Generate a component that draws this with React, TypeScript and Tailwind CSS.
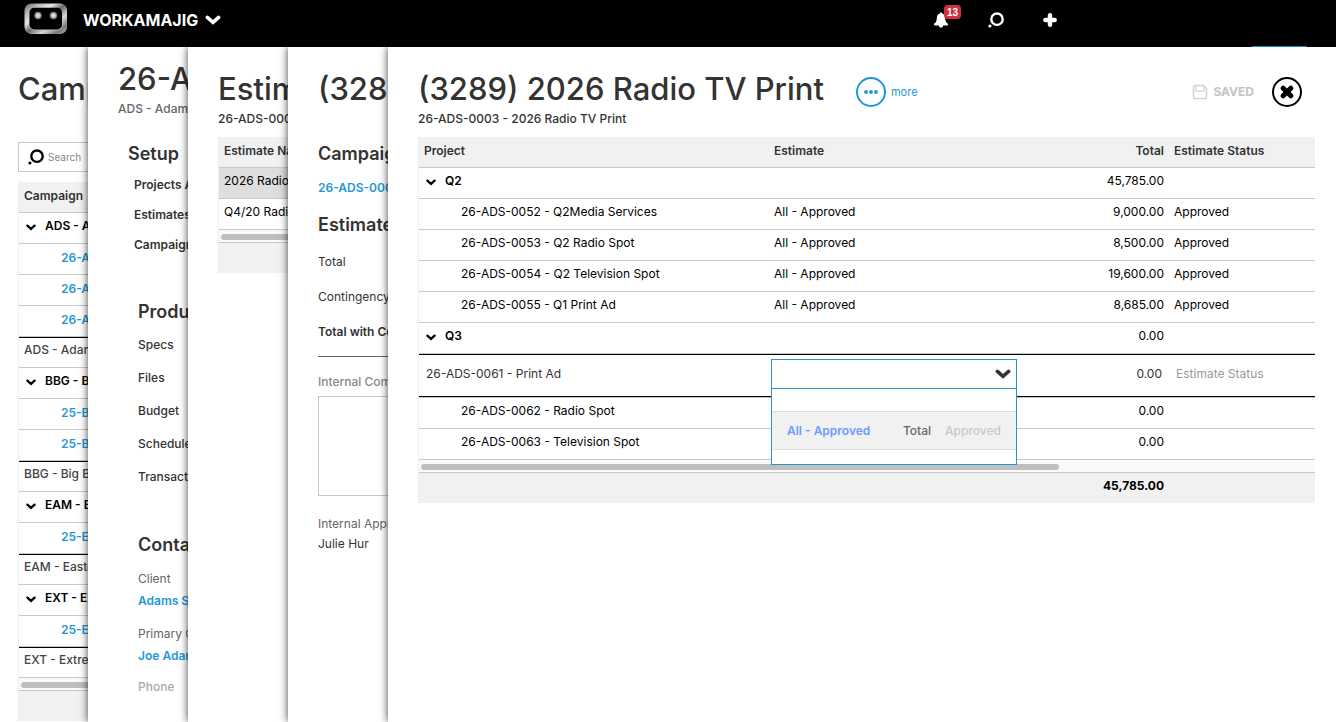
import type { ReactNode } from "react";

type ProjectRow = { name: string; estimate: string; total: string; status: string };

const q2Rows: ProjectRow[] = [
  { name: "26-ADS-0052 - Q2Media Services", estimate: "All - Approved", total: "9,000.00", status: "Approved" },
  { name: "26-ADS-0053 - Q2 Radio Spot", estimate: "All - Approved", total: "8,500.00", status: "Approved" },
  { name: "26-ADS-0054 - Q2 Television Spot", estimate: "All - Approved", total: "19,600.00", status: "Approved" },
  { name: "26-ADS-0055 - Q1 Print Ad", estimate: "All - Approved", total: "8,685.00", status: "Approved" },
];

const campaignGroups = [
  { name: "ADS - Adams", items: ["26-ADS", "26-ADS", "26-ADS"] },
  { name: "BBG - Big Bang", items: ["25-BBG", "25-BBG"] },
  { name: "EAM - Eastern", items: ["25-EAM"] },
  { name: "EXT - Extreme", items: ["25-EXT"] },
];

function Logo() {
  return (
    <svg width="44" height="32" viewBox="0 0 44 32" aria-label="Workamajig">
      <defs>
        <linearGradient id="rim" x1="0" y1="0" x2="1" y2="1">
          <stop offset="0" stopColor="#5c5c5c" />
          <stop offset="0.18" stopColor="#b8b8b8" />
          <stop offset="0.35" stopColor="#e6e6e6" />
          <stop offset="0.5" stopColor="#6a6a6a" />
          <stop offset="0.68" stopColor="#d8d8d8" />
          <stop offset="0.85" stopColor="#7a7a7a" />
          <stop offset="1" stopColor="#b0b0b0" />
        </linearGradient>
        <radialGradient id="eye">
          <stop offset="0" stopColor="#f2f2f2" />
          <stop offset="0.6" stopColor="#b5b5b5" />
          <stop offset="1" stopColor="#333333" />
        </radialGradient>
      </defs>
      <rect x="0.5" y="0.5" width="42.5" height="30.5" rx="7" fill="url(#rim)" />
      <rect x="5" y="5" width="33.5" height="22.3" rx="5" fill="#c4c4c4" />
      <rect x="5.5" y="4.8" width="32.5" height="21.6" rx="4.5" fill="#000" />
      <circle cx="14" cy="12.5" r="4" fill="url(#eye)" />
      <circle cx="29.5" cy="12.5" r="4" fill="url(#eye)" />
    </svg>
  );
}

function ThickChevron() {
  return (
    <svg width="16" height="10" viewBox="0 0 16 10" fill="none" aria-hidden="true">
      <path d="M2.4 2.4 8 7.3l5.6-4.9" stroke="currentColor" strokeWidth="3.6" strokeLinecap="round" strokeLinejoin="miter" />
    </svg>
  );
}

function SmallChevron() {
  return (
    <svg width="10" height="7" viewBox="0 0 10 7" fill="none" className="mt-0.5" aria-hidden="true">
      <path d="M1.4 1.6 5 4.9l3.6-3.3" stroke="currentColor" strokeWidth="2.3" strokeLinecap="round" />
    </svg>
  );
}

function SearchIcon() {
  return (
    <svg width="16" height="16" viewBox="0 0 16 16" fill="none" aria-hidden="true">
      <circle cx="9" cy="7.2" r="5.7" stroke="currentColor" strokeWidth="2.4" />
      <circle cx="1.9" cy="14" r="1.6" fill="currentColor" />
    </svg>
  );
}

function TopBar() {
  return (
    <header className="relative z-50 flex h-[47px] items-start bg-black pr-[279px] pl-6 text-white">
      <div className="pt-[3px]">
        <Logo />
      </div>
      <button type="button" className="ml-[15px] flex h-10 items-center gap-[7px] text-base font-bold">
        WORKAMAJIG
        <ThickChevron />
      </button>
      <nav className="ml-auto flex h-10 items-center gap-9" aria-label="Tools">
        <button type="button" aria-label="Notifications" className="relative">
          <svg width="16" height="16" viewBox="0 0 16 16" fill="currentColor" aria-hidden="true">
            <path d="M8 .4c.7 0 1.1.5 1.2 1.1 1.8.5 2.8 2 2.9 4 .2 3 .5 4.6 2.5 6.100.9.7.7 1.800-.4 1.800H10.200c-.2 1.300-1 2.100-2.200 2.100s-2-.8-2.200-2.100H1.800c-1.100 0-1.300-1.100-.4-1.800 2-1.500 2.300-3.100 2.500-6.100.1-2 1.100-3.500 2.900-4C6.900.9 7.300.4 8 .4Z" />
          </svg>
          <span className="absolute -top-[15px] left-[11px] mt-2 flex h-3.5 w-[17px] items-center justify-center rounded-[4px] bg-[#d32f3c] font-['Liberation_Sans'] text-[10px] font-bold">
            13
          </span>
        </button>
        <button type="button" aria-label="Search" className="ml-[3px]">
          <SearchIcon />
        </button>
        <button type="button" aria-label="Add" className="ml-[3px]">
          <svg width="14" height="14" viewBox="0 0 14 14" aria-hidden="true">
            <path d="M7 2.300v9.400M2.300 7h9.400" stroke="currentColor" strokeWidth="4.400" strokeLinecap="round" />
          </svg>
        </button>
      </nav>
      <span className="absolute right-[29px] bottom-0 h-px w-[55px] bg-[#1f86ba]" />
    </header>
  );
}

function Panel({ children, className }: { children: ReactNode; className: string }) {
  return (
    <section className={`relative overflow-hidden bg-white whitespace-nowrap shadow-[0_0_8px_rgba(0,0,0,0.75)] ${className}`}>
      {children}
    </section>
  );
}

function Title({ children }: { children: ReactNode }) {
  return <h1 className="text-[31px] leading-10 font-medium text-[#333]">{children}</h1>;
}

function Heading({ children }: { children: ReactNode }) {
  return <h2 className="text-lg leading-6 font-semibold text-[#333]">{children}</h2>;
}

function ScrollRow({ span, bar }: { span: number; bar: string }) {
  return (
    <tr>
      <td colSpan={span} className="h-[13px] border-b border-[#c8c8c8] bg-[#fafafa] p-0 px-[2px] pt-0.5">
        <div className={`h-1.5 rounded-full bg-[#bfbfbf] ${bar}`} />
      </td>
    </tr>
  );
}

const tableClass = "table-fixed border-separate border-spacing-0 border-l border-dotted border-[#ddd] text-left text-xs text-black";
const headClass = "h-[31px] border-b border-[#c8c8c8] bg-[#f1f1f1] pb-0.5 pl-[5px] font-semibold text-[#333]";
const cellBase = "border-b border-[#c8c8c8] pb-1 pl-[5px]";
const cellClass = `h-[31px] ${cellBase}`;
const linkClass = "font-semibold text-[#1f97d8]";

function GroupLabel({ children }: { children: ReactNode }) {
  return (
    <button type="button" className="flex items-center gap-[9px] pl-[2px] font-semibold">
      <SmallChevron />
      {children}
    </button>
  );
}

function CampaignsPanel() {
  return (
    <Panel className="w-[88px] shrink-0 pt-[22px] pl-[18px]">
      <Title>Campaigns</Title>
      <label className="mt-[33px] flex h-[30px] w-60 items-center gap-1 border border-[#c8c8c8] pl-[9px]">
        <SearchIcon />
        <input type="search" aria-label="Search campaigns" placeholder="Search" className="w-40 text-[10px] outline-none placeholder:text-[#888]" />
      </label>
      <table className={`mt-2.5 w-[300px] ${tableClass}`}>
        <thead>
          <tr>
            <th className={headClass}>Campaign</th>
          </tr>
        </thead>
        {campaignGroups.map((group) => (
          <tbody key={group.name}>
            <tr>
              <td className={cellClass}>
                <GroupLabel>{group.name}</GroupLabel>
              </td>
            </tr>
            {group.items.map((item, index) => (
              <tr key={index}>
                <td className="h-[31px] border-b border-[#c8c8c8] pb-0.5 pl-[5px]">
                  <a href="#" className={`pl-[37px] ${linkClass}`}>{item}</a>
                </td>
              </tr>
            ))}
            <tr>
              <td className="h-[31px] border-t border-b border-t-black border-b-[#c8c8c8] pb-1.5 pl-[5px] font-medium text-[#444]">
                {group.name}
              </td>
            </tr>
          </tbody>
        ))}
        <tfoot>
          <ScrollRow span={1} bar="w-52" />
          <tr>
            <td className="h-[30px] bg-[#f1f1f1]" />
          </tr>
        </tfoot>
      </table>
    </Panel>
  );
}

function CampaignMenuPanel() {
  return (
    <Panel className="w-[100px] shrink-0 pt-3 pl-[30px] text-xs leading-5 text-[#333]">
      <Title>26-ADS</Title>
      <p className="font-medium text-[#666]">ADS - Adams</p>
      <nav className="mt-[23px] pl-2.5" aria-label="Campaign">
        <Heading>Setup</Heading>
        <ul className="mt-[9px] flex flex-col gap-2.5 pl-1.5 font-semibold">
          <li><a href="#">Projects And</a></li>
          <li><a href="#">Estimates</a></li>
          <li><a href="#">Campaigns</a></li>
        </ul>
      </nav>
      <nav className="mt-[45px] pl-5" aria-label="Production">
        <Heading>Production</Heading>
        <ul className="mt-[11px] flex flex-col gap-[13px] font-medium">
          <li><a href="#">Specs</a></li>
          <li><a href="#">Files</a></li>
          <li><a href="#">Budget</a></li>
          <li><a href="#">Schedule</a></li>
          <li><a href="#">Transactions</a></li>
        </ul>
      </nav>
      <div className="mt-[46px] pl-5">
        <Heading>Contacts</Heading>
        <dl className="mt-3 text-[#666]">
          <dt>Client</dt>
          <dd className="mt-0.5"><a href="#" className={linkClass}>Adams S</a></dd>
          <dt className="mt-[13px]">Primary C</dt>
          <dd className="mt-0.5"><a href="#" className={linkClass}>Joe Adams</a></dd>
          <dt className="mt-[11px] font-medium text-[#aaa]">Phone</dt>
        </dl>
      </div>
    </Panel>
  );
}

function EstimatesPanel() {
  return (
    <Panel className="w-[100px] shrink-0 pt-[22px] pl-[30px]">
      <Title>Estimates</Title>
      <p className="text-xs leading-5 font-medium text-[#333]">26-ADS-0003</p>
      <table className={`mt-2 w-[300px] ${tableClass}`}>
        <thead>
          <tr>
            <th className={headClass}>Estimate Name</th>
          </tr>
        </thead>
        <tbody>
          <tr>
            <td className={`bg-[#dedede] ${cellClass}`}>2026 Radio</td>
          </tr>
          <tr>
            <td className={cellClass}>Q4/20 Radio</td>
          </tr>
        </tbody>
        <tfoot>
          <ScrollRow span={1} bar="w-52" />
          <tr>
            <td className="h-[30px] bg-[#f1f1f1]" />
          </tr>
        </tfoot>
      </table>
    </Panel>
  );
}

function EstimateDetailPanel() {
  return (
    <Panel className="w-[100px] shrink-0 pt-[22px] pl-[30px] text-xs leading-5 text-[#333]">
      <Title>(3289)</Title>
      <div className="mt-[33px]">
        <Heading>Campaign</Heading>
      </div>
      <a href="#" className={`mt-3 block ${linkClass}`}>26-ADS-0003</a>
      <div className="mt-[15px]">
        <Heading>Estimate</Heading>
      </div>
      <div className="mt-[15px] flex w-[300px] flex-col gap-[15px] border-b border-[#666] pb-3.5">
        <p>Total</p>
        <p>Contingency</p>
        <p className="font-semibold">Total with Con</p>
      </div>
      <label className="mt-[15px] block font-medium text-[#888]">
        Internal Comm
        <textarea className="mt-1 block h-[100px] w-[300px] resize-none border border-[#c8c8c8] outline-none" />
      </label>
      <p className="mt-[18px] text-[#666]">Internal Appr</p>
      <p>Julie Hur</p>
    </Panel>
  );
}

function DataRow({ row, first = false }: { row: ProjectRow; first?: boolean }) {
  const cell = first ? `h-8 border-t border-t-[#c8c8c8] ${cellBase}` : cellClass;
  return (
    <tr>
      <td className={cell}>
        <span className="pl-[37px]">{row.name}</span>
      </td>
      <td className={cell}>{row.estimate}</td>
      <td className={`pr-[5px] text-right ${cell}`}>{row.total}</td>
      <td className={cell}>{row.status}</td>
    </tr>
  );
}

function GroupRow({ name, total }: { name: string; total: string }) {
  return (
    <tr>
      <td className={cellClass}>
        <GroupLabel>{name}</GroupLabel>
      </td>
      <td className={cellClass} />
      <td className={`pr-[5px] text-right ${cellClass}`}>{total}</td>
      <td className={cellClass} />
    </tr>
  );
}

function EstimateDropdown() {
  return (
    <div className="relative">
      <select
        aria-label="Estimate"
        defaultValue=""
        className="block h-[30px] w-full appearance-none border border-[#2a94cf] bg-white px-3 outline-none"
      >
        <option value=""></option>
        <option value="all">All - Approved</option>
      </select>
      <span className="pointer-events-none absolute top-2.5 right-1.5 text-[#333]">
        <ThickChevron />
      </span>
      <ul role="listbox" aria-label="Estimates" className="absolute top-full left-0 z-10 w-full border border-t-0 border-[#2a94cf] bg-white pt-[22px] pb-3.5">
        <li role="option" aria-selected="false" className="flex h-[39px] items-center border-y border-[#ddd] bg-[#f1f1f1] px-[15px] font-medium">
          <span className="flex-1 font-semibold text-[#6b9dff]">All - Approved</span>
          <span className="text-[#666]">Total</span>
          <span className="ml-3.5 text-[#c8c8c8]">Approved</span>
        </li>
      </ul>
    </div>
  );
}

function EditRow() {
  const cell = "h-[43px] border-y border-black p-0 text-[#333]";
  return (
    <tr>
      <td className={cell}>
        <span className="block pb-1 pl-[7px]">26-ADS-0061 - Print Ad</span>
      </td>
      <td className={cell}>
        <div className="px-0.5 pb-[3px]">
          <EstimateDropdown />
        </div>
      </td>
      <td className={cell}>
        <span className="block pr-[7px] pb-1 text-right">0.00</span>
      </td>
      <td className={cell}>
        <input aria-label="Estimate Status" placeholder="Estimate Status" className="mb-1 w-full pl-[7px] outline-none placeholder:text-[#999]" />
      </td>
    </tr>
  );
}

function ProjectsPanel() {
  return (
    <Panel className="min-w-0 flex-1 pt-[22px] pr-[21px] pl-[30px]">
      <div className="flex items-start">
        <Title>(3289) 2026 Radio TV Print</Title>
        <button type="button" className="mt-2 ml-8 flex items-center gap-[5px] text-[11px] text-[#1f97d8]">
          <span className="flex size-[30px] items-center justify-center rounded-full border-2">
            <svg width="14" height="4" viewBox="0 0 14 4" fill="currentColor" aria-hidden="true">
              <circle cx="2" cy="2" r="1.900" />
              <circle cx="7" cy="2" r="1.900" />
              <circle cx="12" cy="2" r="1.900" />
            </svg>
          </span>
          more
        </button>
        <div className="mt-2 mr-[13px] ml-auto flex items-center">
          <button type="button" disabled className="flex items-center gap-[5px] text-xs font-bold text-[#c4c4c4]">
            <svg width="16" height="16" viewBox="0 0 16 16" fill="none" stroke="#d2d2d2" strokeWidth="1.500" aria-hidden="true">
              <path d="M3 1.500h8.500l3 3V13.200a1.300 1.300 0 0 1-1.300 1.300H2.800a1.300 1.300 0 0 1-1.300-1.300V3A1.500 1.500 0 0 1 3 1.500Z" />
              <path d="M4 1.500V7.200h8V1.800" strokeWidth="1.200" />
            </svg>
            SAVED
          </button>
          <button type="button" aria-label="Close" className="ml-[18px] flex size-[30px] items-center justify-center rounded-full border-2 border-black">
            <svg width="14" height="14" viewBox="0 0 14 14" aria-hidden="true">
              <path d="M3.200 3.200l7.600 7.600M10.800 3.200l-7.600 7.600" stroke="#000" strokeWidth="5" strokeLinecap="round" />
            </svg>
          </button>
        </div>
      </div>
      <p className="text-xs leading-5 font-medium text-[#333]">26-ADS-0003 - 2026 Radio TV Print</p>
      <table className={`mt-2 w-full ${tableClass}`}>
        <colgroup>
          <col className="w-[350px]" />
          <col className="w-[250px]" />
          <col className="w-[150px]" />
          <col />
        </colgroup>
        <thead>
          <tr>
            <th className={headClass}>Project</th>
            <th className={headClass}>Estimate</th>
            <th className={`pr-[5px] text-right ${headClass}`}>Total</th>
            <th className={headClass}>Estimate Status</th>
          </tr>
        </thead>
        <tbody>
          <GroupRow name="Q2" total="45,785.00" />
          {q2Rows.map((row) => (
            <DataRow key={row.name} row={row} />
          ))}
          <GroupRow name="Q3" total="0.00" />
          <EditRow />
          <DataRow first row={{ name: "26-ADS-0062 - Radio Spot", estimate: "", total: "0.00", status: "" }} />
          <DataRow row={{ name: "26-ADS-0063 - Television Spot", estimate: "", total: "0.00", status: "" }} />
        </tbody>
        <tfoot>
          <ScrollRow span={4} bar="w-[638px]" />
          <tr className="bg-[#f1f1f1]">
            <td className="h-[30px]" />
            <td />
            <td className="pr-[5px] pb-1 text-right font-bold">45,785.00</td>
            <td />
          </tr>
        </tfoot>
      </table>
    </Panel>
  );
}

export default function App() {
  return (
    <div className="flex min-h-screen flex-col bg-white font-['Inter',sans-serif]">
      <TopBar />
      <main className="flex flex-1 overflow-hidden">
        <CampaignsPanel />
        <CampaignMenuPanel />
        <EstimatesPanel />
        <EstimateDetailPanel />
        <ProjectsPanel />
      </main>
    </div>
  );
}
